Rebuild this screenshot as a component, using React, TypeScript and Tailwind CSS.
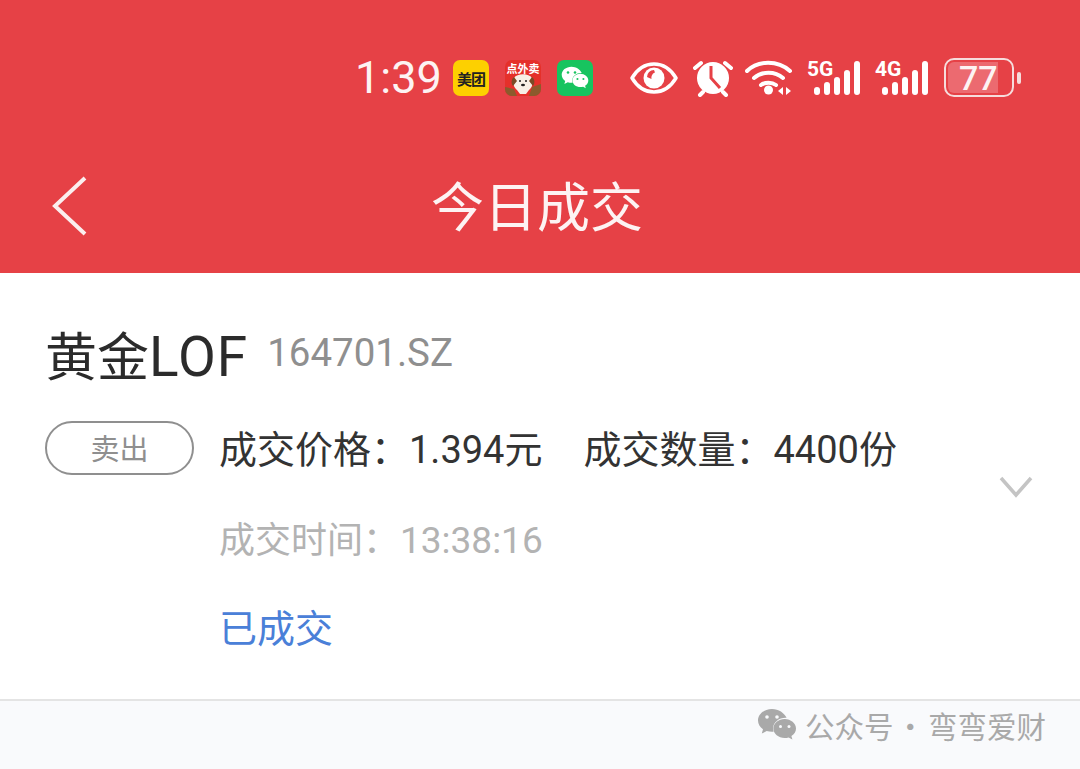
const cjk = "font-['Noto_Sans_CJK_SC','Noto_Sans',sans-serif]";
const latin = "font-['Roboto',sans-serif]";

const WechatBubbles = ({ className, fill, eye }: { className: string; fill: string; eye: string }) => (
  <svg viewBox="0 0 40 34" className={className}>
    <path d="M15 1C7 1 1 6.200 1 12.500c0 3.600 2 6.700 5 8.800L4.800 25.500l4.900-2.500c1.700.5 3.400.8 5.300.8.600 0 1.100 0 1.600-.1-.3-1-.5-2-.5-3.100 0-6 5.600-10.800 12.600-10.800h.9C27.300 5 21.700 1 15 1z" fill={fill} />
    <path d="M39 20.500c0-5.200-5.200-9.500-11.300-9.500-6.300 0-11.300 4.300-11.300 9.500S21.400 30 27.700 30c1.400 0 2.700-.2 3.900-.6l3.800 2.200-1-3.500c3-1.800 4.600-4.500 4.600-7.600z" fill={fill} />
    <circle cx="10" cy="9" r="1.800" fill={eye} />
    <circle cx="20" cy="9" r="1.800" fill={eye} />
    <circle cx="23.500" cy="18.500" r="1.500" fill={eye} />
    <circle cx="32" cy="18.500" r="1.500" fill={eye} />
  </svg>
);

const Signal = ({ label }: { label: string }) => (
  <div className="relative w-[54px] h-[36px]">
    <span className="absolute left-0 top-[-2px] text-[21px] leading-[22px] font-bold font-['Roboto',sans-serif] text-white">
      {label}
    </span>
    <svg viewBox="0 0 54 36" className="w-[54px] h-[36px]">
      <g stroke="#fff" strokeWidth="6" strokeLinecap="round">
        <path d="M10 30v2" />
        <path d="M20 25v7" />
        <path d="M30 20v12" />
        <path d="M40 13v19" />
        <path d="M50 4v28" />
      </g>
    </svg>
  </div>
);

const StatusBar = () => (
  <div className="h-[156px] flex items-start pt-[54px] pl-[357px]">
    <span className="text-[45px] leading-[48px] font-normal font-['Roboto',sans-serif] text-[#fdf3f3] w-[98px] ml-[-2px]">1:39</span>

    <div className="w-[36px] h-[36px] mt-[6px] rounded-[7px] bg-[#fdd000] flex items-center justify-center text-[15px] leading-none font-bold text-[#222] tracking-[-1px] font-['Noto_Sans_CJK_SC',sans-serif]">
      美团
    </div>

    <div className="w-[36px] h-[36px] mt-[6px] ml-[16px] rounded-[7px] overflow-hidden bg-[#e5302a] relative">
      <svg viewBox="0 0 36 36" className="w-[36px] h-[36px]">
        <path d="M0 27l9 2 3 7H0zM36 24l-9 3-3 9h12z" fill="#8c5a2c" />
        <path d="M9 18c3-5 15-5 18 0 2 4 0 10-3 12l-3 4h-6l-3-4c-3-2-5-8-3-12z" fill="#f7efe6" />
        <path d="M9 17c-3 2-3 7-1 9l4-5zM27 17c3 2 3 7 1 9l-4-5z" fill="#7a4a25" />
        <circle cx="15" cy="21" r="1" fill="#222" />
        <circle cx="21" cy="21" r="1" fill="#222" />
        <ellipse cx="18" cy="25" rx="2" ry="1.300" fill="#222" />
      </svg>
      <span className="absolute left-0 right-0 top-[2px] text-center text-[11px] leading-[12px] font-bold text-white whitespace-nowrap font-['Noto_Sans_CJK_SC',sans-serif]">
        点外卖
      </span>
    </div>

    <div className="w-[36px] h-[36px] mt-[6px] ml-[16px] rounded-[7px] bg-[#17c45f] flex items-center justify-center">
      <WechatBubbles className="w-[28px] h-[24px]" fill="#fff" eye="#17c45f" />
    </div>

    {/* system icons */}
    <svg viewBox="0 0 48 32" className="w-[48px] h-[32px] ml-[37px] mt-[8px]">
      <path d="M2 16C8 6 16 2 24 2s16 4 22 14c-6 10-14 14-22 14S8 26 2 16z" fill="none" stroke="#fff" strokeWidth="3.500" strokeLinejoin="round" />
      <circle cx="24" cy="16" r="10.500" fill="#fff" />
      <path d="M17 15a7 7 0 0 1 7-7l1 2.500c-2 .5-4 3-3.500 6.500z" fill="#e64146" />
    </svg>

    <svg viewBox="0 0 40 38" className="w-[40px] h-[38px] ml-[15px] mt-[5px]">
      <circle cx="20" cy="19" r="16" fill="#fff" />
      <path d="M18 7v12l9 10" fill="none" stroke="#e64146" strokeWidth="3" />
      <path d="M2 9l6-5M38 9l-6-5" stroke="#fff" strokeWidth="4" strokeLinecap="round" />
      <path d="M10 33l-3 3M30 33l3 3" stroke="#fff" strokeWidth="4" strokeLinecap="round" />
    </svg>

    <svg viewBox="0 0 48 38" className="w-[48px] h-[38px] ml-[12px] mt-[4px]">
      <g fill="none" stroke="#fff" strokeWidth="4" strokeLinecap="round">
        <path d="M2 13C13 2 33 2 45 13" />
        <path d="M9 20c8-7 21-7 29 0" />
        <path d="M16 27c4-3 11-3 15 0" />
      </g>
      <circle cx="23.500" cy="32" r="4.500" fill="#fff" />
      <path d="M38 29v8l-5-4zM41 29v8l5-4z" fill="#fff" />
    </svg>

    <div className="ml-[14px] mt-[6px]"><Signal label="5G" /></div>
    <div className="ml-[14px] mt-[6px]"><Signal label="4G" /></div>

    <div className="ml-[15px] mt-[4px] flex items-center">
      <div className="w-[70px] h-[39px] rounded-[10px] border-[2px] border-[#f6dcdc] p-[2px]">
        <div className="h-full w-[50px] rounded-l-[6px] bg-[#ec6a70] flex items-center justify-start text-[34px] leading-none font-medium text-[#fdf3f3] font-['Roboto',sans-serif] pl-[11px]">
          77
        </div>
      </div>
      <div className="w-[4px] h-[12px] ml-[3px] rounded-full bg-[#f6dcdc]" />
    </div>
  </div>
);

export default function App() {
  return (
    <div className={`w-[1080px] h-[769px] overflow-hidden bg-[#f9fafc] ${cjk}`}>
      <header className="h-[273px] bg-[#e64146]">
        <StatusBar />
        <div className="relative h-[100px] flex items-center justify-center">
          <svg viewBox="0 0 36 60" className="absolute left-[52px] top-[20px] w-[36px] h-[60px]">
            <path d="M33 2L3 30l30 28" fill="none" stroke="#fbeeee" strokeWidth="4" />
          </svg>
          <h1 className="text-[53px] leading-[60px] text-[#fdf3f3] mt-[-5px] mr-[6px]">今日成交</h1>
        </div>
      </header>

      <main className="relative h-[428px] bg-white border-b-2 border-[#e4e4e4] pl-[47px] pt-[49px]">
        <div className="flex items-center h-[66px] ml-[-2px]">
          <span className="text-[52px] leading-[66px] text-[#2b2b2b]">黄金<span className={`${latin} text-[55px] tracking-[1px]`}>LOF</span></span>
          <span className={`ml-[19px] mt-[-4px] text-[38.500px] leading-[66px] text-[#8f8f8f] ${latin}`}>164701.SZ</span>
        </div>

        <div className="flex mt-[34px]">
          <div className="w-[149px] h-[54px] mt-[-1px] ml-[-2px] rounded-full border-2 border-[#8f8f8f] flex items-center justify-center text-[29px] text-[#8f8f8f]">
            卖出
          </div>
          <div className="ml-[25px]">
            <div className="flex items-baseline text-[38px] leading-[56px] text-[#333] mt-[-3px]">
              <span>成交价格：</span>
              <span className={latin}>1.394</span>
              <span>元</span>
              <span className="ml-[41px]">成交数量：</span>
              <span className={latin}>4400</span>
              <span>份</span>
            </div>
            <div className="flex items-baseline text-[36px] leading-[56px] text-[#b3b3b3] mt-[31px]">
              <span>成交时间：</span>
              <span className={`${latin} text-[37px] ml-[1px]`}>13:38:16</span>
            </div>
            <p className="text-[38px] leading-[56px] text-[#4a80d8] mt-[29px]">已成交</p>
          </div>
        </div>

        <svg viewBox="0 0 34 22" className="absolute left-[999px] top-[203px] w-[34px] h-[22px]">
          <path d="M2 2l15 17L32 2" fill="none" stroke="#c4c4c4" strokeWidth="3.500" />
        </svg>
      </main>

      <footer className="flex items-center h-[50px] mt-[-1px] pl-[757px] text-[29.500px] leading-[40px] text-[#a9a9a9] whitespace-nowrap">
        <WechatBubbles className="w-[40px] h-[34px]" fill="#a9a9a9" eye="#f9fafc" />
        <span className="ml-[8px]">公众号</span>
        <span className="ml-[2px]">·</span>
        <span className="ml-[3px]">弯弯爱财</span>
      </footer>
    </div>
  );
}
